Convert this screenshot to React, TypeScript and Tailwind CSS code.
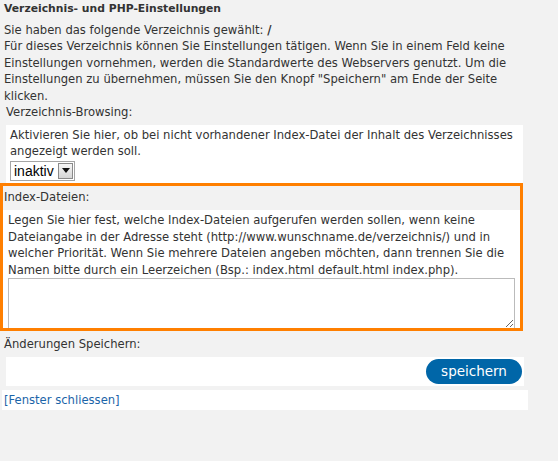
export default function App() {
  return (
    <div className="min-h-[461px] w-full bg-[#f2f2f2] text-[#333] text-[11.6px] leading-[16.5px] font-['DejaVu_Sans',Verdana,sans-serif]">
      <div className="w-[528px]">
        {/* Header + intro */}
        <div className="px-1 pt-[1px] whitespace-nowrap">
          <div className="font-bold text-[10.8px]">Verzeichnis- und PHP-Einstellungen</div>
          <div className="mt-[4px]">
            Sie haben das folgende Verzeichnis gewählt: <b>/</b>
            <br />
            Für dieses Verzeichnis können Sie Einstellungen tätigen. Wenn Sie in einem Feld keine
            <br />
            Einstellungen vornehmen, werden die Standardwerte des Webservers genutzt. Um die
            <br />
            Einstellungen zu übernehmen, müssen Sie den Knopf "Speichern" am Ende der Seite
            <br />
            klicken.
          </div>
        </div>

        {/* Verzeichnis-Browsing */}
        <div className="px-[6px]">Verzeichnis-Browsing:</div>
        <div className="ml-[6px] mt-[4px] w-[517px] bg-white px-1 pt-[2px] pb-[2px] whitespace-nowrap">
          <div>
            Aktivieren Sie hier, ob bei nicht vorhandener Index-Datei der Inhalt des Verzeichnisses
            <br />
            angezeigt werden soll.
          </div>
          <div className="mt-[1px] flex h-[20px] w-[65px] items-stretch border border-[#a5a5a5] bg-white font-['Liberation_Sans',Arial,sans-serif] text-[14px] leading-[18px] text-black">
            <span className="flex-1 pl-[3px]">inaktiv</span>
            <span className="m-[1px] flex w-[15px] items-center justify-center border border-[#8a8a8a] bg-gradient-to-b from-[#f6f6f6] to-[#d6d6d6]">
              <svg width="8" height="5" viewBox="0 0 8 5">
                <path d="M0 0h8L4 5z" fill="#111" />
              </svg>
            </span>
          </div>
        </div>

        {/* Index-Dateien (highlighted) */}
        <div className="w-[523px] border-[3px] border-[#ff7f00]">
          <div className="px-[1px] pt-[3px] pb-[5px]">Index-Dateien:</div>
          <div className="bg-white pl-[5px] pr-[2px] pt-[2px] whitespace-nowrap">
            <div>
              Legen Sie hier fest, welche Index-Dateien aufgerufen werden sollen, wenn keine
              <br />
              Dateiangabe in der Adresse steht (http://www.wunschname.de/verzeichnis/) und in
              <br />
              welcher Priorität. Wenn Sie mehrere Dateien angeben möchten, dann trennen Sie die
              <br />
              Namen bitte durch ein Leerzeichen (Bsp.: index.html default.html index.php).
            </div>
            <textarea className="block h-[50px] w-[507px] resize border border-b-0 border-[#bbb] bg-white p-1 outline-none" />
          </div>
        </div>

        {/* Speichern */}
        <div className="mt-[5px] px-1">Änderungen Speichern:</div>
        <div className="ml-[6px] mt-[4px] flex w-[518px] justify-end bg-white py-[2px] pr-[2px]">
          <button className="h-[25px] w-[96px] rounded-full bg-[#0066a8] text-[13.5px] leading-[25px] text-white">
            speichern
          </button>
        </div>

        <div className="ml-[2px] mt-[4px] h-[20px] w-[526px] bg-white px-[2px] leading-[20px]">
          <a href="#" className="text-[#1b64a8]">[Fenster schliessen]</a>
        </div>
      </div>
    </div>
  );
}
